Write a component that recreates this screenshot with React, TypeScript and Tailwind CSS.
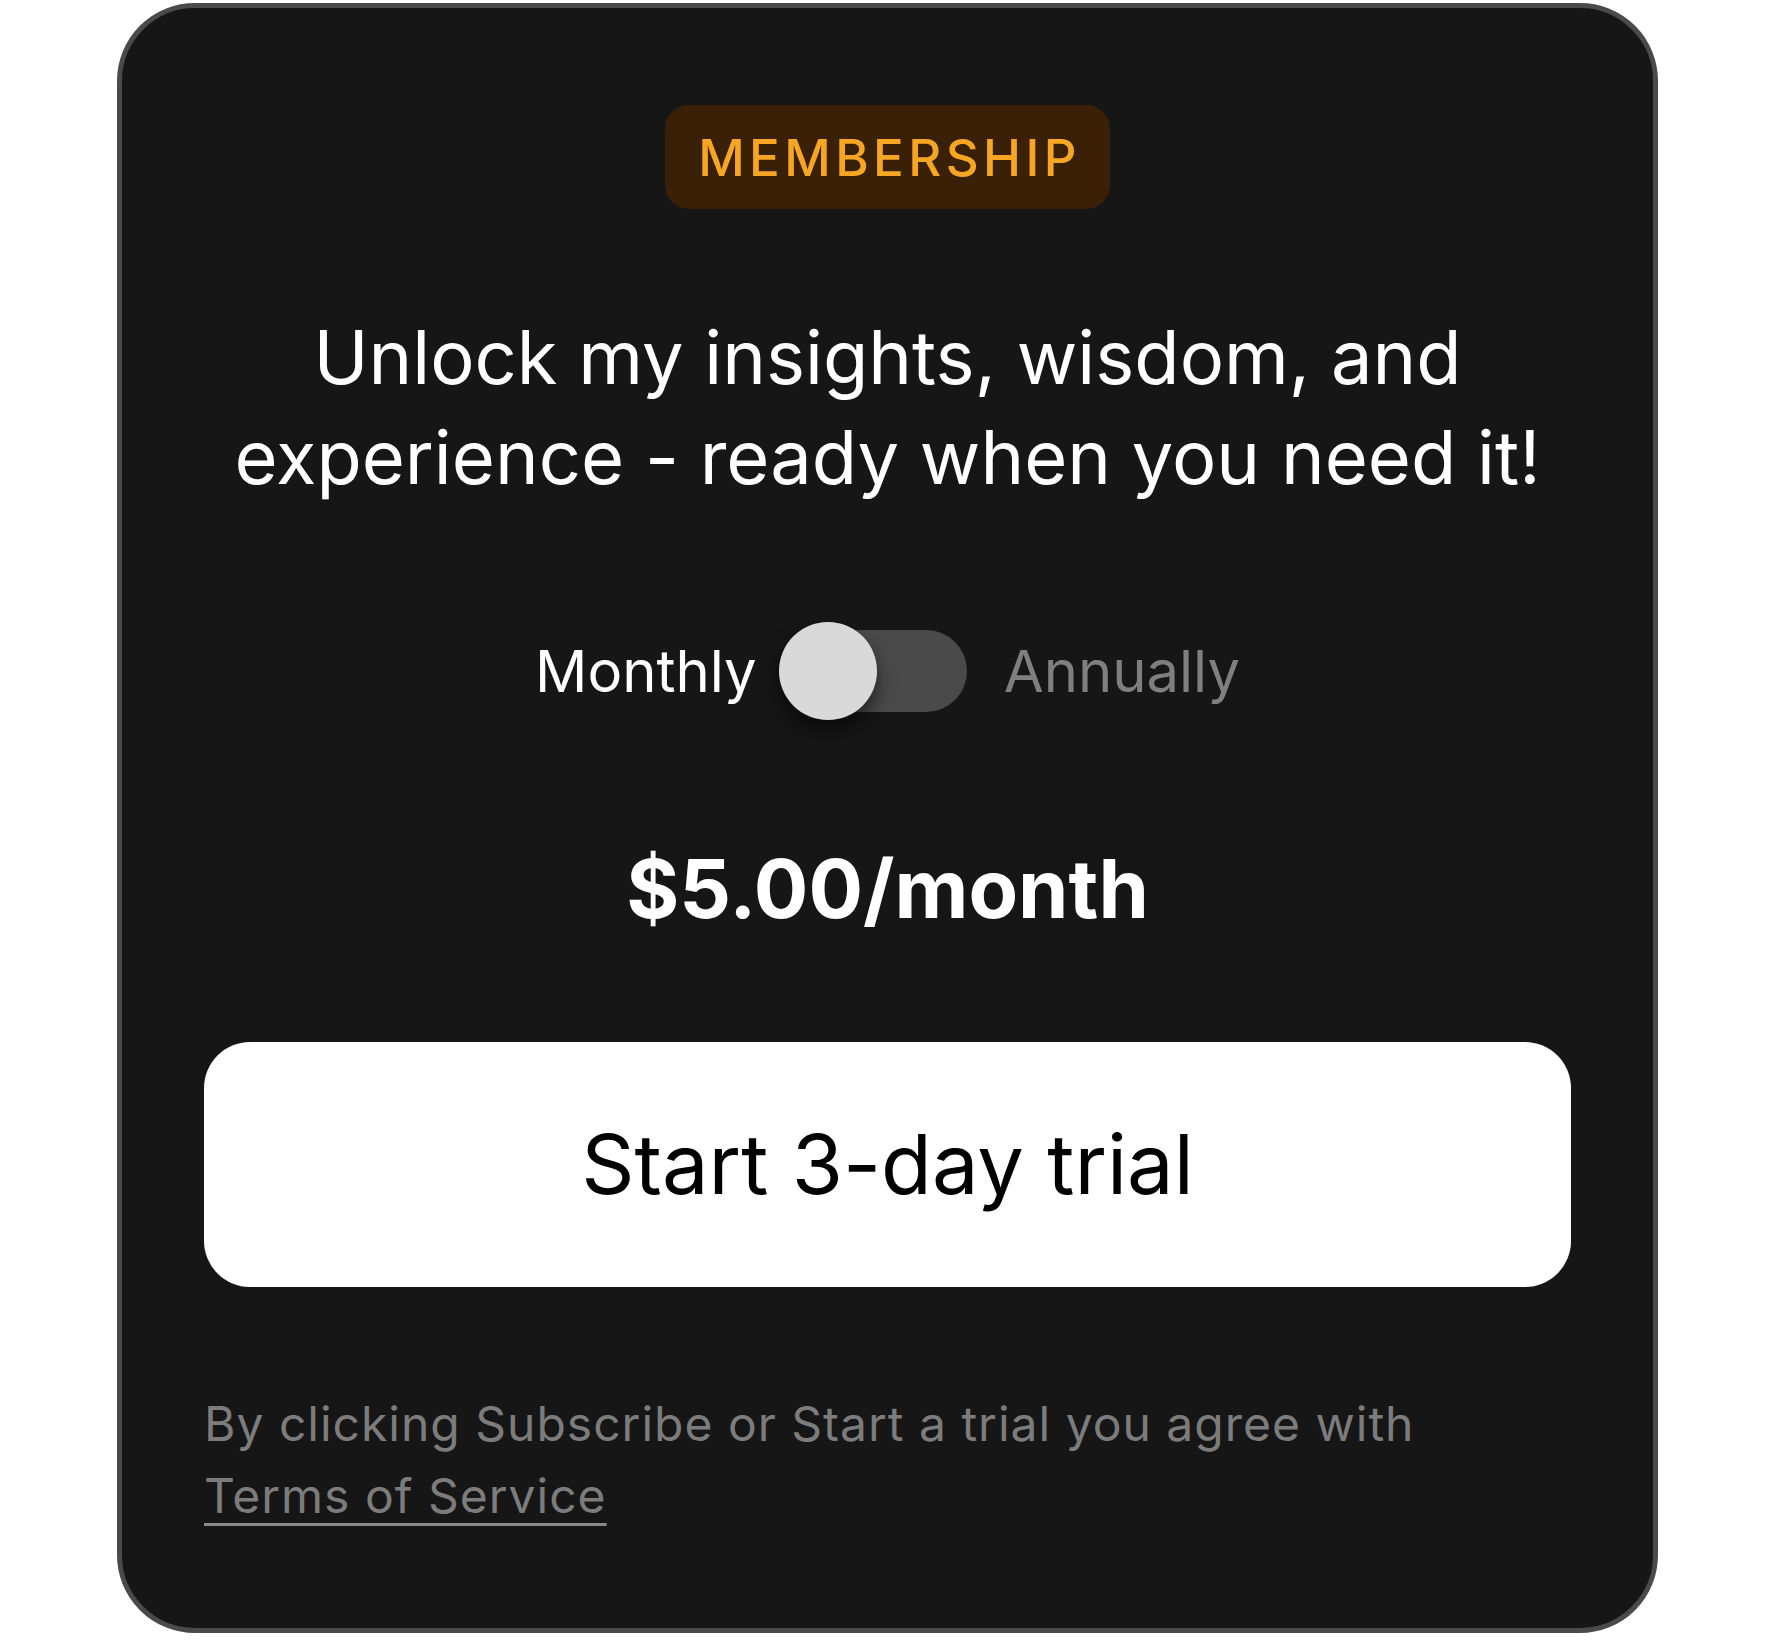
import React from "react";

export default function App() {
  return (
    <div className="w-[1771px] h-[1640px] bg-white pt-[3px]" style={{ fontFamily: "Inter, 'Noto Sans', sans-serif" }}>
      <div className="ml-[117px] w-[1541px] h-[1630px] rounded-[78px] border-[5px] border-[#4a4a4a] bg-[#161616] flex flex-col items-center px-[82px]">
        <div className="mt-[97px] h-[104px] pl-[33px] pr-[29px] rounded-[24px] bg-[#3a2006] flex items-center">
          <span className="text-[51px] leading-none tracking-[4.4px] text-[#f6a623] font-medium">MEMBERSHIP</span>
        </div>
        <h1 className="mt-[98px] text-center text-white text-[74px] leading-[100px] font-normal">
          Unlock my insights, wisdom, and
          <br />
          experience - ready when you need it!
        </h1>
        <div className="mt-[115px] h-[98px] flex items-center">
          <span className="text-[58px] leading-none text-white">Monthly</span>
          <div className="relative ml-[22px] mr-[37px] w-[188px] h-[98px] flex items-center">
            <div className="w-[188px] h-[82px] rounded-full bg-[#4a4a4a]" />
            <div className="absolute left-0 top-0 w-[98px] h-[98px] rounded-full bg-[#d9d9d9] shadow-[0_10px_18px_rgba(0,0,0,0.55)]" />
          </div>
          <span className="text-[58px] leading-none text-[#7f7f7f]">Annually</span>
        </div>
        <div className="mt-[128px] text-[81px] leading-[82px] font-bold text-white">$5.00/month</div>
        <button className="mt-[112px] w-full h-[245px] rounded-[46px] bg-white flex items-center justify-center">
          <span className="text-[83px] leading-none text-black">Start 3-day trial</span>
        </button>
        <p className="mt-[101px] self-stretch text-left text-[48px] leading-[72px] tracking-[1px] text-[#7c7c7c]">
          By clicking Subscribe or Start a trial you agree with
          <br />
          <span className="underline decoration-[3px] underline-offset-[10px] decoration-[#8a8a8a]">Terms of Service</span>
        </p>
      </div>
    </div>
  );
}
